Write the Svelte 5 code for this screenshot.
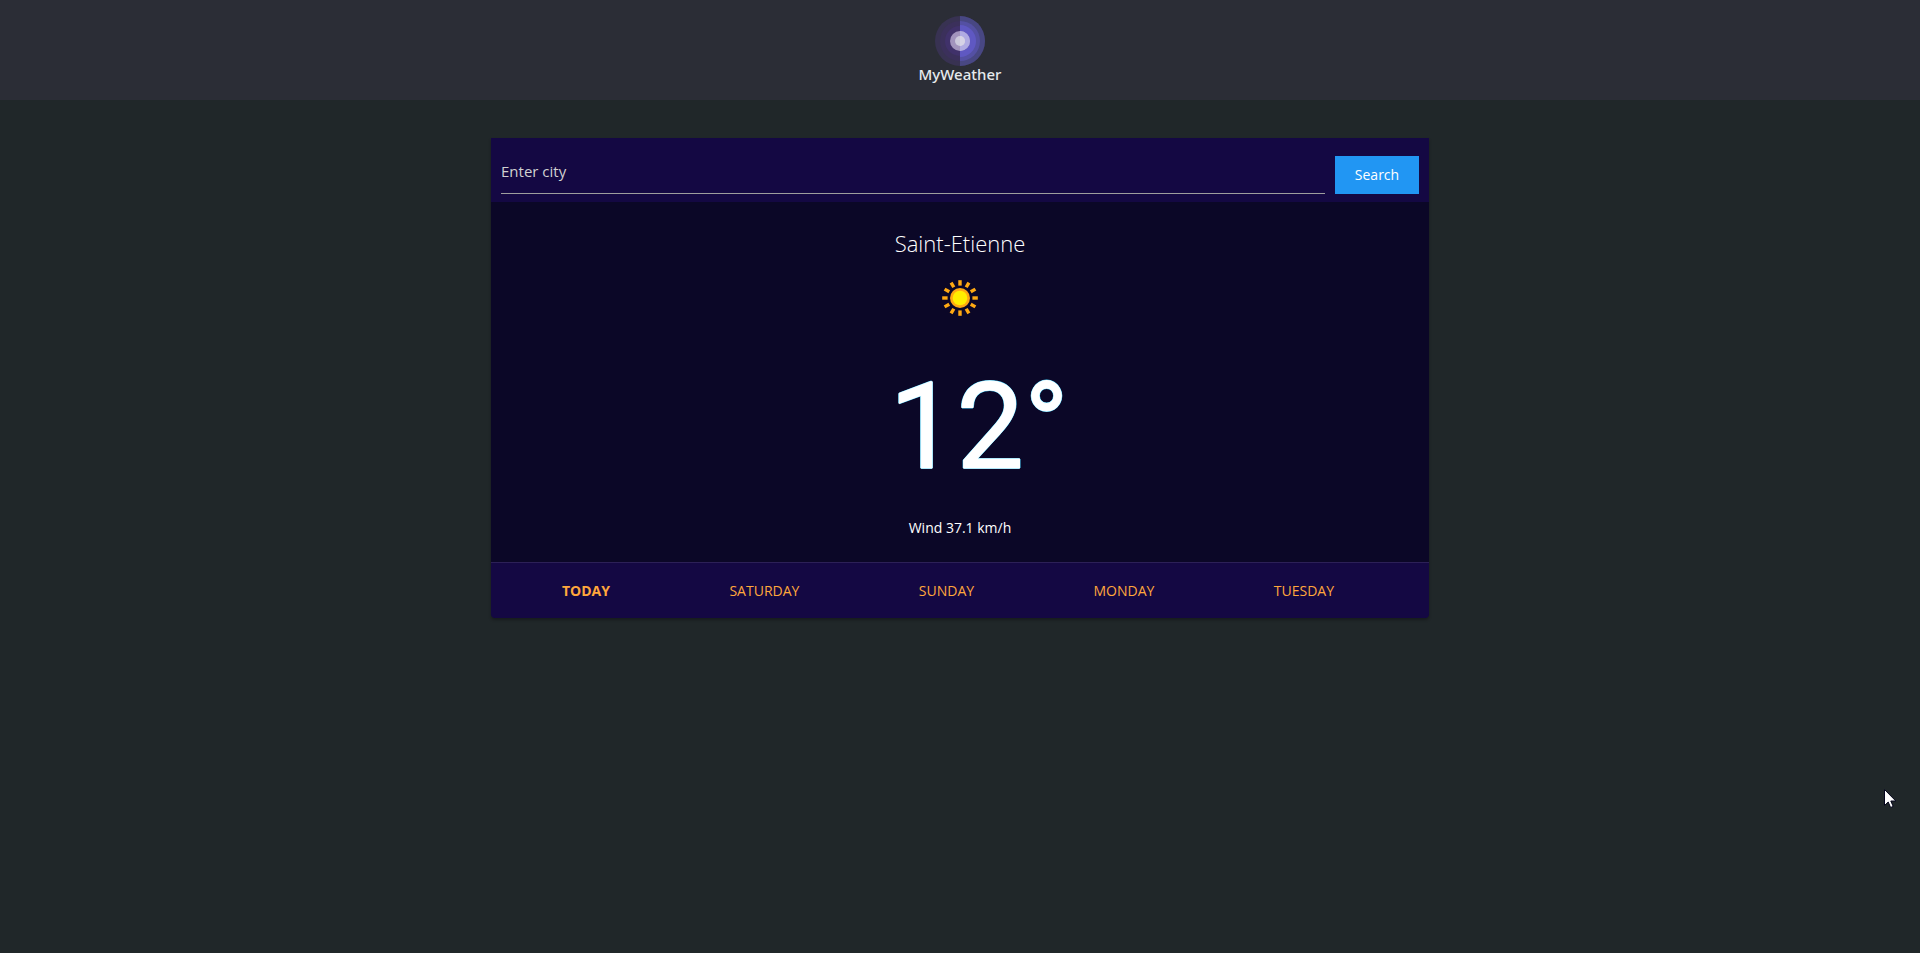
<script>
  const days = ['TODAY', 'SATURDAY', 'SUNDAY', 'MONDAY', 'TUESDAY'];
  let active = $state('TODAY');
  let city = $state('');
</script>

<div class="page">
  <header>
    <svg class="logo" viewBox="0 0 50 50" aria-hidden="true">
      <circle cx="25" cy="25" r="25" fill="#383252" />
      <circle cx="25" cy="25" r="20" fill="#3b305b" />
      <circle cx="25" cy="25" r="15" fill="#40316a" />
      <path d="M25 0a25 25 0 0 1 0 50z" fill="#484783" />
      <path d="M25 5a20 20 0 0 1 0 40z" fill="#5450a3" />
      <path d="M25 9a16 16 0 0 1 0 32z" fill="#5f58c2" />
      <circle cx="25" cy="25" r="10" fill="#a294bd" />
      <path d="M25 15a10 10 0 0 1 0 20z" fill="#b0abe2" />
      <circle cx="25" cy="25" r="5" fill="#ccc9dc" />
      <path d="M25 20a5 5 0 0 1 0 10z" fill="#d6d3e6" />
    </svg>
    <span class="brand">MyWeather</span>
  </header>

  <main class="card">
    <form onsubmit={(e) => e.preventDefault()}>
      <input type="text" aria-label="City" placeholder="Enter city" bind:value={city} />
      <button type="submit">Search</button>
    </form>

    <section class="weather">
      <h1>Saint-Etienne</h1>
      <svg class="sun" viewBox="0 0 36 36" aria-hidden="true">
        <g fill="#ffa912">
          {#each Array(12) as _, i}
            <rect x="16.3" y="0.2" width="3.4" height="5.4" transform="rotate({i * 30} 18 18)" />
          {/each}
        </g>
        <circle cx="18" cy="18" r="10" fill="#ffa912" />
        <circle cx="18" cy="18" r="7.3" fill="#ffee00" />
      </svg>
      <p class="temperature">12°</p>
      <p class="wind">Wind 37.1 km/h</p>
    </section>

    <nav>
      {#each days as day}
        <button class:active={day === active} onclick={() => (active = day)}>{day}</button>
      {/each}
    </nav>
  </main>

  <svg class="cursor" viewBox="0 0 12 19" aria-hidden="true">
    <path d="M.5.5v16l3.7-3.5 2.4 5.5 2.6-1.1-2.4-5.4h5z" fill="#fff" stroke="#05051c" />
  </svg>
</div>

<style>
  :global(body) {
    margin: 0;
    background: #202729;
  }
  .page {
    min-height: 100vh;
    font-family: "Open Sans", "Noto Sans", sans-serif;
    font-size: 14px;
    line-height: 24px;
    color: #fff;
  }
  header {
    display: flex;
    flex-direction: column;
    align-items: center;
    box-sizing: border-box;
    height: 100px;
    padding-top: 16px;
    background: #2b2d36;
  }
  .logo {
    width: 50px;
    height: 50px;
  }
  .brand {
    margin-top: -4px;
    font-family: "Noto Sans", sans-serif;
    font-size: 15px;
    font-weight: 500;
    color: #e6eaec;
  }
  .card {
    max-width: 938px;
    margin: 38px auto 0;
    border-radius: 0 0 4px 4px;
    background: #140843;
    box-shadow: 0 2px 3px rgba(0, 0, 0, 0.3);
    overflow: hidden;
  }
  form {
    display: flex;
    align-items: flex-end;
    gap: 10px;
    box-sizing: border-box;
    height: 64px;
    padding: 0 10px 8px;
  }
  input {
    flex: 1;
    min-width: 0;
    box-sizing: border-box;
    height: 46px;
    padding: 0;
    border: 0;
    border-bottom: 1px solid #9e9e9e;
    background: none;
    color: #fff;
    font: inherit;
    font-size: 15px;
    outline: none;
  }
  input::placeholder {
    color: #d1d1d1;
    opacity: 1;
  }
  form button {
    width: 84px;
    height: 38px;
    padding: 0;
    border: 0;
    background: #2196f3;
    color: #fff;
    font: inherit;
  }
  .weather {
    display: flex;
    flex-direction: column;
    align-items: center;
    padding-bottom: 22px;
    background: #0b0727;
  }
  h1 {
    margin: 24px 0 0;
    font-size: 22px;
    font-weight: 300;
    line-height: 34px;
  }
  .sun {
    width: 36px;
    height: 36px;
    margin-top: 20px;
  }
  .temperature {
    margin: 41px 0 0;
    padding-left: 38px;
    font-family: Roboto, sans-serif;
    font-size: 120px;
    font-weight: 400;
    line-height: 140px;
    -webkit-text-stroke: 1px #fff;
    text-shadow: 1px 0 #4fcdf5, -1px 0 #4fcdf5, 0 1px #4fcdf5, 0 -1px #4fcdf5;
  }
  .wind {
    margin: 19px 0 0;
  }
  nav {
    display: flex;
    justify-content: space-between;
    padding: 16px 95px 15px 71px;
    border-top: 1px solid #2c2057;
  }
  nav button {
    padding: 0;
    border: 0;
    background: none;
    color: #ffa73c;
    font: inherit;
  }
  nav .active {
    font-weight: 700;
  }
  .cursor {
    position: absolute;
    top: 789px;
    left: 98.15%;
    width: 12px;
    height: 19px;
  }
</style>
